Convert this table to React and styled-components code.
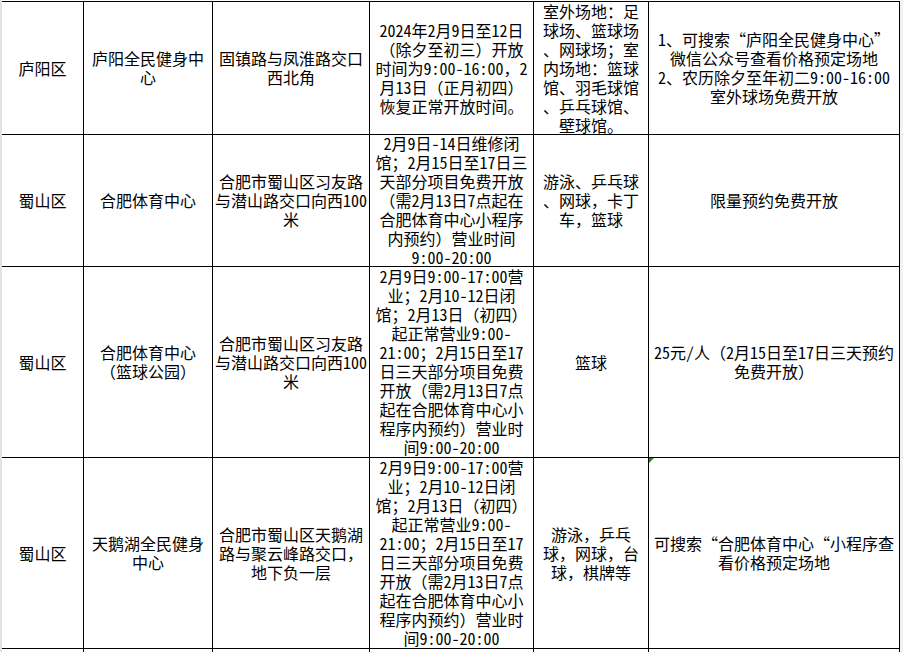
import React from 'react'
import styled, { createGlobalStyle } from 'styled-components'

const schedule = [
    '2月9日9:00-17:00营',
    '业；2月10-12日闭',
    '馆；2月13日（初四）',
    '起正常营业9:00-',
    '21:00；2月15日至17',
    '日三天部分项目免费',
    '开放（需2月13日7点',
    '起在合肥体育中心小',
    '程序内预约）营业时',
    '间9:00-20:00',
]

const rows = [
    {
        height: 132,
        cells: [
            ['庐阳区'],
            ['庐阳全民健身中', '心'],
            ['固镇路与凤淮路交口', '西北角'],
            ['2024年2月9日至12日', '（除夕至初三）开放', '时间为9:00-16:00，2', '月13日（正月初四）', '恢复正常开放时间。'],
            ['室外场地：足', '球场、篮球场', '、网球场；室', '内场地：篮球', '馆、羽毛球馆', '、乒乓球馆、', '壁球馆。'],
            ['1、可搜索“庐阳全民健身中心”', '微信公众号查看价格预定场地', '2、农历除夕至年初二9:00-16:00', '室外球场免费开放'],
        ],
    },
    {
        height: 131,
        cells: [
            ['蜀山区'],
            ['合肥体育中心'],
            ['合肥市蜀山区习友路', '与潜山路交口向西100', '米'],
            ['2月9日-14日维修闭', '馆；2月15日至17日三', '天部分项目免费开放', '（需2月13日7点起在', '合肥体育中心小程序', '内预约）营业时间', '9:00-20:00'],
            ['游泳、乒乓球', '、网球，卡丁', '车，篮球'],
            ['限量预约免费开放'],
        ],
    },
    {
        height: 190,
        cells: [
            ['蜀山区'],
            ['合肥体育中心', '（篮球公园）'],
            ['合肥市蜀山区习友路', '与潜山路交口向西100', '米'],
            schedule,
            ['篮球'],
            ['25元/人（2月15日至17日三天预约', '免费开放）'],
        ],
    },
    {
        height: 190,
        flagged: 5,
        cells: [
            ['蜀山区'],
            ['天鹅湖全民健身', '中心'],
            ['合肥市蜀山区天鹅湖', '路与聚云峰路交口，', '地下负一层'],
            schedule,
            ['游泳，乒乓', '球，网球，台', '球，棋牌等'],
            ['可搜索“合肥体育中心“小程序查', '看价格预定场地'],
        ],
    },
]

// next row, only its top edge is in view
const tail = [[], [], ['合肥市蜀山区天鹅湖'], [], [], []]

const App = () => {
    const heights = rows.map(r => `${r.height}px`).join(' ') + ' 120px'

    return (
        <>
            <GlobalStyle />
            <Page lang="zh-CN">
                <Gutter />
                <Sheet $rows={heights}>
                    {rows.map((row, i) =>
                        row.cells.map((lines, j) => (
                            <Cell key={`${i}-${j}`}>
                                {row.flagged === j && <Flag />}
                                {lines.join('\n')}
                            </Cell>
                        ))
                    )}
                    {tail.map((lines, j) => (
                        <Cell key={`tail-${j}`} $top>
                            {lines.join('\n')}
                        </Cell>
                    ))}
                </Sheet>
                <Gutter $light />
            </Page>
        </>
    )
}

const GlobalStyle = createGlobalStyle`
    html, body {
        margin: 0;
        padding: 0;
        overflow: hidden;
        background: #ffffff;
    }
`

const Page = styled.div`
    display: flex;
    height: 652px;
    overflow: hidden;
    font-family: "Noto Sans Mono CJK SC", "Noto Sans CJK SC", "Liberation Mono", monospace;
    font-size: 16px;
    line-height: 19px;
    color: #000000;
`

const Gutter = styled.div`
    flex: 0 0 ${p => (p.$light ? '3px' : '2px')};
    background: ${p => (p.$light ? '#f2f2f2' : '#e2e2e2')};
`

const Sheet = styled.div`
    display: grid;
    grid-template-columns: 81px 128px 156px 163px 114px 250px;
    grid-template-rows: ${p => p.$rows};
    gap: 1px;
    background: #000000;
    padding: 1px 1px 0 0;
    margin-top: 1px;
    align-self: flex-start;
`

const Cell = styled.div`
    position: relative;
    display: flex;
    align-items: ${p => (p.$top ? 'flex-start' : 'center')};
    justify-content: center;
    background: #ffffff;
    text-align: center;
    white-space: pre;
    overflow: hidden;
    padding-top: ${p => (p.$top ? '1px' : '0')};
    line-height: 19px;
`

const Flag = styled.span`
    position: absolute;
    top: 0;
    left: 0;
    width: 0;
    height: 0;
    border-top: 5px solid #1f8a1f;
    border-right: 5px solid transparent;
`

export default App
